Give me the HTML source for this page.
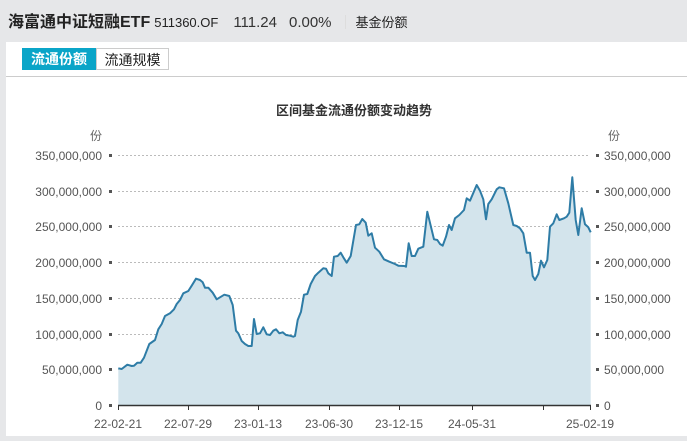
<!DOCTYPE html>
<html><head><meta charset="utf-8"><style>
body{margin:0;width:687px;height:441px;background:#e6e7e9;position:relative;overflow:hidden;font-family:"Liberation Sans","Noto Sans CJK SC",sans-serif;}
.hd{position:absolute;top:8px;left:8px;white-space:nowrap;color:#222;}
.t{font-size:16px;font-weight:bold;}
.panel{position:absolute;left:6px;top:42px;width:681px;height:394px;background:#fff;}
.tab{position:absolute;top:6px;height:22px;line-height:22px;font-size:14px;text-align:center;box-sizing:border-box;}
</style></head><body>
<div class="hd"><span class="t">海富通中证短融ETF</span><span style="font-size:13px;margin-left:4px">511360.OF</span><span style="font-size:15px;margin-left:15px;color:#333">111.24</span><span style="font-size:15px;margin-left:12px;color:#333">0.00%</span><span style="display:inline-block;width:1px;height:14px;background:#ddd;margin:0 10px 0 13px;vertical-align:-2px"></span><span style="font-size:13px">基金份额</span></div>
<div class="panel">
<div class="tab" style="left:16px;width:74px;background:#0aa5c8;color:#fff;font-weight:bold">流通份额</div>
<div class="tab" style="left:90px;width:73px;border:1px solid #ccc;color:#222">流通规模</div>
<div style="position:absolute;left:0;top:34px;width:681px;height:1px;background:#ccc"></div>
</div>
<svg style="position:absolute;left:0;top:0" width="687" height="441" font-family="Liberation Sans,Noto Sans CJK SC,sans-serif">
<text x="354" y="115" font-size="13" text-anchor="middle" fill="#333" font-weight="bold">区间基金流通份额变动趋势</text>
<text x="96" y="140" font-size="12" text-anchor="middle" fill="#666">份</text>
<text x="614" y="140" font-size="12" text-anchor="middle" fill="#666">份</text>
<g stroke="#bbb" stroke-dasharray="2,2" stroke-width="1">
<line x1="118" x2="590" y1="155.5" y2="155.5"/><line x1="118" x2="590" y1="191.5" y2="191.5"/><line x1="118" x2="590" y1="226.5" y2="226.5"/><line x1="118" x2="590" y1="262.5" y2="262.5"/><line x1="118" x2="590" y1="298.5" y2="298.5"/><line x1="118" x2="590" y1="334.5" y2="334.5"/><line x1="118" x2="590" y1="369.5" y2="369.5"/>
</g>
<path fill="#d3e4ec" stroke="none" d="M118.3,368.3 L121.7,369 127.3,364.7 131.7,366 134,365.7 137.3,362.7 140.7,362.7 144,357.7 149.3,344 155,340 158.3,329.3 161.7,324 165,316 170,313.3 174,309.3 176.7,304 180,300 183.3,293.3 188.3,291 191.7,285.7 196,278.7 200,280 202.7,282.3 205,287.7 208.3,287.7 212.7,292.7 216.7,299.3 220,297.3 224.3,294.7 229.3,296 232.7,305 236,330.7 238.3,333.3 241.7,341 245,344 248.3,346 251.7,346 254,319 256.7,334 260,333.3 263.3,327.3 266.7,334.3 270,335 273.3,330.7 276,329.3 279.3,333.3 282.7,332.3 286,335 290,335.7 293.3,336.7 295,336 297.7,320 301,311.7 304,294.7 307.3,294 310.7,284 315,276 318.3,272.7 323.3,268.3 326,268.7 328.3,273.3 331.7,276 334,256.7 337.7,256 340.7,252.7 343.3,257.3 346.7,262.7 350.7,256 356,225 359.3,224.3 362.3,219 365.7,222.7 368.3,235.7 371.7,233.3 375,247.7 379.3,251.7 384,259.3 389.3,261.7 395,264 398.3,265.7 404.3,266 406,266.7 408.7,243.3 411.7,256 415,256 418.3,248.7 423.3,246.7 427.3,211.7 434,239.3 437.3,240 440,244 442.7,245.7 446,236.7 449,225 451.7,230 455,218.3 459.3,215 464,210 466.7,198.3 470,200.7 476.7,185 480,190.7 483.3,199.3 486,219.3 488.3,204 491.7,199.3 496.7,189.3 499.3,187.3 504,188.3 508.3,203.3 513.3,225 516.7,226 520,228.3 523.3,233.3 526.7,252.7 530,252.7 532.7,276 535,280 538.3,274 541,260.7 544,267.3 547.3,260 550,226.7 553.3,223.3 556.7,214.3 559.3,220 564,218.3 566.7,216.7 569.3,212.7 572.3,177.3 575.7,220 578.3,235 581.7,208.3 585,224.3 588.3,227.3 590.7,232.3 L590.7,405 L118.3,405 Z"/>
<path fill="none" stroke="#2e7ca6" stroke-width="2" stroke-linejoin="round" d="M118.3,368.3 L121.7,369 127.3,364.7 131.7,366 134,365.7 137.3,362.7 140.7,362.7 144,357.7 149.3,344 155,340 158.3,329.3 161.7,324 165,316 170,313.3 174,309.3 176.7,304 180,300 183.3,293.3 188.3,291 191.7,285.7 196,278.7 200,280 202.7,282.3 205,287.7 208.3,287.7 212.7,292.7 216.7,299.3 220,297.3 224.3,294.7 229.3,296 232.7,305 236,330.7 238.3,333.3 241.7,341 245,344 248.3,346 251.7,346 254,319 256.7,334 260,333.3 263.3,327.3 266.7,334.3 270,335 273.3,330.7 276,329.3 279.3,333.3 282.7,332.3 286,335 290,335.7 293.3,336.7 295,336 297.7,320 301,311.7 304,294.7 307.3,294 310.7,284 315,276 318.3,272.7 323.3,268.3 326,268.7 328.3,273.3 331.7,276 334,256.7 337.7,256 340.7,252.7 343.3,257.3 346.7,262.7 350.7,256 356,225 359.3,224.3 362.3,219 365.7,222.7 368.3,235.7 371.7,233.3 375,247.7 379.3,251.7 384,259.3 389.3,261.7 395,264 398.3,265.7 404.3,266 406,266.7 408.7,243.3 411.7,256 415,256 418.3,248.7 423.3,246.7 427.3,211.7 434,239.3 437.3,240 440,244 442.7,245.7 446,236.7 449,225 451.7,230 455,218.3 459.3,215 464,210 466.7,198.3 470,200.7 476.7,185 480,190.7 483.3,199.3 486,219.3 488.3,204 491.7,199.3 496.7,189.3 499.3,187.3 504,188.3 508.3,203.3 513.3,225 516.7,226 520,228.3 523.3,233.3 526.7,252.7 530,252.7 532.7,276 535,280 538.3,274 541,260.7 544,267.3 547.3,260 550,226.7 553.3,223.3 556.7,214.3 559.3,220 564,218.3 566.7,216.7 569.3,212.7 572.3,177.3 575.7,220 578.3,235 581.7,208.3 585,224.3 588.3,227.3 590.7,232.3"/>
<line x1="118" x2="591" y1="405.5" y2="405.5" stroke="#333" stroke-width="1.5"/>
<g stroke="#333" stroke-width="1"><line x1="118.5" x2="118.5" y1="405" y2="410"/><line x1="188.5" x2="188.5" y1="405" y2="410"/><line x1="258.5" x2="258.5" y1="405" y2="410"/><line x1="329.5" x2="329.5" y1="405" y2="410"/><line x1="399.5" x2="399.5" y1="405" y2="410"/><line x1="472.5" x2="472.5" y1="405" y2="410"/><line x1="543.5" x2="543.5" y1="405" y2="410"/><line x1="590.5" x2="590.5" y1="405" y2="410"/></g>
<g fill="#555"><rect x="109" y="154" width="3" height="3"/><rect x="109" y="190" width="3" height="3"/><rect x="109" y="225" width="3" height="3"/><rect x="109" y="261" width="3" height="3"/><rect x="109" y="297" width="3" height="3"/><rect x="109" y="333" width="3" height="3"/><rect x="109" y="368" width="3" height="3"/><rect x="109" y="404" width="3" height="3"/>
<rect x="596" y="154" width="3" height="3"/><rect x="596" y="190" width="3" height="3"/><rect x="596" y="225" width="3" height="3"/><rect x="596" y="261" width="3" height="3"/><rect x="596" y="297" width="3" height="3"/><rect x="596" y="333" width="3" height="3"/><rect x="596" y="368" width="3" height="3"/><rect x="596" y="404" width="3" height="3"/></g>
<g font-size="12" fill="#555" text-anchor="end"><text x="102" y="160">350,000,000</text><text x="102" y="196">300,000,000</text><text x="102" y="231">250,000,000</text><text x="102" y="267">200,000,000</text><text x="102" y="303">150,000,000</text><text x="102" y="339">100,000,000</text><text x="102" y="374">50,000,000</text><text x="102" y="410">0</text></g>
<g font-size="12" fill="#555"><text x="604" y="160">350,000,000</text><text x="604" y="196">300,000,000</text><text x="604" y="231">250,000,000</text><text x="604" y="267">200,000,000</text><text x="604" y="303">150,000,000</text><text x="604" y="339">100,000,000</text><text x="604" y="374">50,000,000</text><text x="604" y="410">0</text></g>
<g font-size="12" fill="#555" text-anchor="middle"><text x="118" y="428">22-02-21</text><text x="188" y="428">22-07-29</text><text x="258" y="428">23-01-13</text><text x="329" y="428">23-06-30</text><text x="399" y="428">23-12-15</text><text x="472" y="428">24-05-31</text><text x="590" y="428">25-02-19</text></g>
</svg>
</body></html>
